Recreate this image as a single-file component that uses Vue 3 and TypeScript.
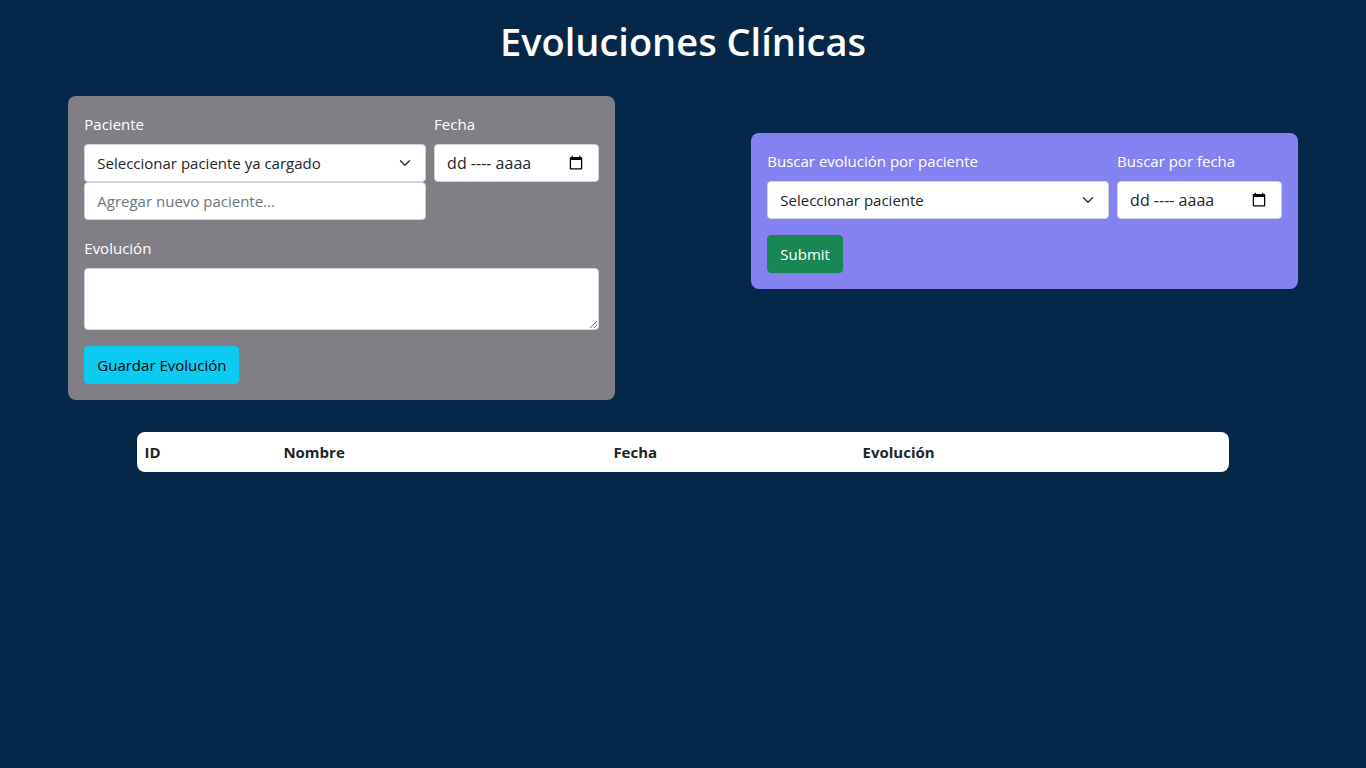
<script setup lang="ts">
import { ref } from 'vue'

const paciente = ref('')
const nuevoPaciente = ref('')
const fecha = ref('')
const evolucion = ref('')
const buscarPaciente = ref('')
const buscarFecha = ref('')

const columnas: { clave: string; titulo: string }[] = [
  { clave: 'id', titulo: 'ID' },
  { clave: 'nombre', titulo: 'Nombre' },
  { clave: 'fecha', titulo: 'Fecha' },
  { clave: 'evolucion', titulo: 'Evolución' },
]
</script>

<template>
  <main class="page">
    <h1 class="title">Evoluciones Clínicas</h1>

    <div class="panels">
      <form class="panel panel-create" @submit.prevent>
        <div class="fields">
          <div class="field">
            <label for="paciente">Paciente</label>
            <select id="paciente" v-model="paciente" class="control select">
              <option value="">Seleccionar paciente ya cargado</option>
            </select>
            <input
              v-model="nuevoPaciente"
              class="control"
              type="text"
              placeholder="Agregar nuevo paciente..."
              aria-label="Agregar nuevo paciente"
            />
          </div>
          <div class="field">
            <label for="fecha">Fecha</label>
            <div class="date" :class="{ empty: !fecha }">
              <input id="fecha" v-model="fecha" class="control" type="date" />
              <span v-if="!fecha" class="date-hint" aria-hidden="true">dd ---- aaaa</span>
            </div>
          </div>
        </div>
        <div class="field">
          <label for="evolucion">Evolución</label>
          <textarea id="evolucion" v-model="evolucion" class="control area" rows="2"></textarea>
        </div>
        <button class="button button-info" type="submit">Guardar Evolución</button>
      </form>

      <form class="panel panel-search" @submit.prevent>
        <div class="fields">
          <div class="field">
            <label for="buscar-paciente">Buscar evolución por paciente</label>
            <select id="buscar-paciente" v-model="buscarPaciente" class="control select">
              <option value="">Seleccionar paciente</option>
            </select>
          </div>
          <div class="field">
            <label for="buscar-fecha">Buscar por fecha</label>
            <div class="date" :class="{ empty: !buscarFecha }">
              <input id="buscar-fecha" v-model="buscarFecha" class="control" type="date" />
              <span v-if="!buscarFecha" class="date-hint" aria-hidden="true">dd ---- aaaa</span>
            </div>
          </div>
        </div>
        <button class="button button-success" type="submit">Submit</button>
      </form>
    </div>

    <table class="results">
      <thead>
        <tr>
          <th v-for="c in columnas" :key="c.clave" :class="'col-' + c.clave" scope="col">{{ c.titulo }}</th>
        </tr>
      </thead>
    </table>
  </main>
</template>

<style>
body {
  background: #052849;
}
</style>

<style scoped>
.page,
.page * {
  box-sizing: border-box;
}

.page {
  padding-top: 16px;
  font-family: "Open Sans", "Noto Sans", sans-serif;
  font-size: 15px;
  line-height: 24px;
  color: #fff;
}

.title {
  margin: 0 0 30px;
  font-size: 38px;
  font-weight: 600;
  line-height: 50px;
  text-align: center;
}

.panels {
  display: flex;
  justify-content: space-around;
  align-items: flex-start;
}

.panel {
  display: flex;
  flex-direction: column;
  align-items: flex-start;
  gap: 16px;
  width: 40%;
  padding: 16px;
  border-radius: 8px;
}

.panel-create {
  background: #817f85;
}

.panel-search {
  margin-top: 37px;
  background: #8382f0;
}

.fields {
  display: grid;
  grid-template-columns: minmax(0, 27fr) minmax(0, 13fr);
  gap: 8px;
  width: 100%;
}

.field {
  width: 100%;
}

label {
  display: block;
  margin-bottom: 8px;
  white-space: nowrap;
}

.control {
  display: block;
  width: 100%;
  height: 38px;
  margin: 0;
  padding: 6px 12px;
  border: 1px solid #ced4da;
  border-radius: 4px;
  background-color: #fff;
  color: #212529;
  font: inherit;
}

.control::placeholder {
  color: #6c757d;
  opacity: 1;
}

.select {
  appearance: none;
  padding-right: 36px;
  background-image: url("data:image/svg+xml,%3csvg xmlns='http://www.w3.org/2000/svg' viewBox='0 0 16 16'%3e%3cpath fill='none' stroke='%23343a40' stroke-linecap='round' stroke-linejoin='round' stroke-width='2' d='M2 5l6 6 6-6'/%3e%3c/svg%3e");
  background-repeat: no-repeat;
  background-position: right 12px center;
  background-size: 16px 12px;
}

.area {
  height: auto;
  min-height: 62px;
  resize: vertical;
}

.date {
  position: relative;
  font-size: 16px;
}

.date.empty ::-webkit-datetime-edit {
  opacity: 0;
}

.date-hint {
  position: absolute;
  top: 7px;
  left: 13px;
  color: #212529;
  pointer-events: none;
}

.button {
  padding: 6px 12px;
  border: 1px solid transparent;
  border-radius: 4px;
  font: inherit;
  cursor: pointer;
}

.button-info {
  border-color: #0dcaf0;
  background: #0dcaf0;
  color: #000;
}

.button-success {
  border-color: #198754;
  background: #198754;
  color: #fff;
}

.results {
  width: 80%;
  margin: 32px auto 0;
  border-collapse: separate;
  border-spacing: 0;
  table-layout: fixed;
  border-radius: 8px;
  background: #fff;
  color: #212529;
}

.results th {
  padding: 8px;
  font-weight: 700;
  text-align: left;
}

.col-id {
  width: 12.7%;
}

.col-nombre {
  width: 30.2%;
}

.col-fecha {
  width: 22.8%;
}
</style>
